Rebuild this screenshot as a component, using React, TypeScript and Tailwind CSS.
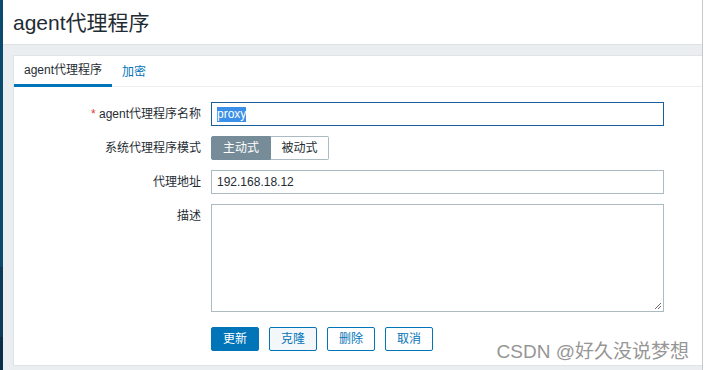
import React from 'react';

const BUTTONS = [
  { label: '更新', primary: true },
  { label: '克隆', hover: true },
  { label: '删除' },
  { label: '取消' },
];

const App: React.FC = () => {
  return (
    <div className="relative flex h-[370px] w-[704px] overflow-hidden bg-[#ebeef0] text-[12px] text-[#1f2c33] font-['Liberation_Sans','Noto_Sans_CJK_SC',sans-serif]">
      {/* Sidebar edge */}
      <div className="flex w-[3px] flex-col">
        <div className="h-[267px] bg-[#0b4a6f]" />
        <div className="h-[70px] bg-[#0a3c5a]" />
        <div className="flex-1 bg-[#082f47]" />
      </div>

      <div className="flex flex-1 flex-col border-r border-[#c9c9c9]">
        {/* Header */}
        <div className="flex h-[45px] items-center border-b border-[#dde2e5] bg-white pl-[10px]">
          <h1 className="text-[21px] leading-none text-[#1f2c33]">agent代理程序</h1>
        </div>

        <div className="flex-1 pl-[10px] pt-[10px]">
          <div className="border border-r-0 border-[#dfe4e7] bg-white pb-[14px]">
            {/* Tabs */}
            <div className="flex h-[31px] border-b border-[#ebeef0]">
              <div className="-mb-px flex h-[31px] items-center border-b-[3px] border-[#0275b8] px-[10px] pb-[1px]">
                agent代理程序
              </div>
              <div className="flex h-[30px] items-center px-[10px] pt-[1px] text-[#0275b8]">加密</div>
            </div>

            {/* Form */}
            <div className="grid grid-cols-[187px_453px] gap-x-[10px] gap-y-[10px] pt-[15px]">
              <label className="text-right leading-[24px]">
                <span className="text-[#e33734]">*</span> agent代理程序名称
              </label>
              <div className="flex h-[24px] items-center border border-[#1a5f98] px-[5px]">
                <span className="bg-[#3a8fe8] leading-[15px] text-white">proxy</span>
              </div>

              <label className="text-right leading-[24px]">系统代理程序模式</label>
              <div className="flex h-[24px]">
                <div className="flex w-[60px] items-center justify-center rounded-l-[2px] border border-[#768d99] bg-[#768d99] text-white">
                  主动式
                </div>
                <div className="flex w-[58px] items-center justify-center rounded-r-[2px] border border-l-0 border-[#acbbc2] bg-white">
                  被动式
                </div>
              </div>

              <label className="text-right leading-[24px]">代理地址</label>
              <div className="flex h-[24px] items-center border border-[#acbbc2] px-[5px]">192.168.18.12</div>

              <label className="text-right leading-[24px]">描述</label>
              <div className="relative h-[108px] border border-[#acbbc2]">
                <svg className="absolute bottom-[1px] right-[1px]" width="8" height="8" viewBox="0 0 8 8">
                  <path d="M7 1 L1 7 M7 4 L4 7" stroke="#6b6b6b" strokeWidth="1" />
                </svg>
              </div>

              <div />
              <div className="mt-[5px] flex gap-[10px]">
                {BUTTONS.map((b) => (
                  <button
                    key={b.label}
                    className={`flex h-[24px] w-[48px] items-center justify-center rounded-[2px] border border-[#0275b8] ${
                      b.primary
                        ? 'bg-[#0275b8] text-white'
                        : b.hover
                        ? 'bg-[#f3f7fa] text-[#0275b8]'
                        : 'bg-white text-[#0275b8]'
                    }`}
                  >
                    {b.label}
                  </button>
                ))}
              </div>
            </div>
          </div>
        </div>
      </div>
      <div className="w-px bg-white" />

      {/* Watermark */}
      <div className="absolute bottom-[9px] right-[15px] text-[19px] leading-none text-[#969696] [text-shadow:0_0_1px_#ffffff]">
        CSDN @好久没说梦想
      </div>
    </div>
  );
};

export default App;
